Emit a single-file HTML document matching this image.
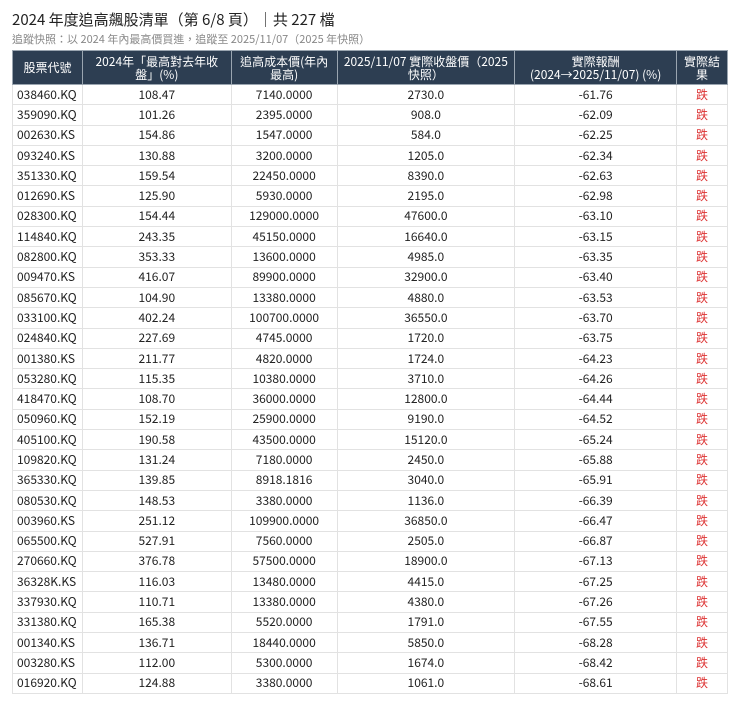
<!DOCTYPE html>
<html><head><meta charset="utf-8"><style>
body{margin:0;background:#fff;font-family:"Liberation Sans","Noto Sans CJK TC",sans-serif;color:#222;}
h1{position:absolute;left:12px;top:9px;margin:0;font-size:15px;font-weight:normal;font-family:"Noto Sans CJK TC",sans-serif;color:#222;}
.sub{position:absolute;left:12px;top:31px;font-size:11px;color:#888;font-family:"Noto Sans CJK TC",sans-serif;}
table{position:absolute;left:12px;top:50px;border-collapse:collapse;width:716px;font-size:12px;font-family:"Noto Sans CJK TC",sans-serif;}
th{background:#2d3e52;color:#fff;font-weight:normal;line-height:13px;height:34px;padding:0 4px;border:1px solid #9aa5b0;box-sizing:border-box;}
td{height:20.3px;padding:0 4px;border:1px solid #e2e2e2;text-align:center;line-height:14px;box-sizing:border-box;}
td:first-child{text-align:left;}
td.r{color:#d33;}
</style></head><body>
<h1>2024 年度追高飆股清單（第 6/8 頁）｜共 227 檔</h1>
<div class="sub">追蹤快照：以 2024 年內最高價買進，追蹤至 2025/11/07（2025 年快照）</div>
<table>
<colgroup><col style="width:70px"><col style="width:149px"><col style="width:106px"><col style="width:178px"><col style="width:162px"><col style="width:51px"></colgroup>
<tr><th>股票代號</th><th>2024年「最高對去年收盤」(%)</th><th>追高成本價(年內最高)</th><th>2025/11/07 實際收盤價（2025快照）</th><th>實際報酬<br>(2024→2025/11/07) (%)</th><th>實際結果</th></tr>
<tr><td>038460.KQ</td><td>108.47</td><td>7140.0000</td><td>2730.0</td><td>-61.76</td><td class="r">跌</td></tr>
<tr><td>359090.KQ</td><td>101.26</td><td>2395.0000</td><td>908.0</td><td>-62.09</td><td class="r">跌</td></tr>
<tr><td>002630.KS</td><td>154.86</td><td>1547.0000</td><td>584.0</td><td>-62.25</td><td class="r">跌</td></tr>
<tr><td>093240.KS</td><td>130.88</td><td>3200.0000</td><td>1205.0</td><td>-62.34</td><td class="r">跌</td></tr>
<tr><td>351330.KQ</td><td>159.54</td><td>22450.0000</td><td>8390.0</td><td>-62.63</td><td class="r">跌</td></tr>
<tr><td>012690.KS</td><td>125.90</td><td>5930.0000</td><td>2195.0</td><td>-62.98</td><td class="r">跌</td></tr>
<tr><td>028300.KQ</td><td>154.44</td><td>129000.0000</td><td>47600.0</td><td>-63.10</td><td class="r">跌</td></tr>
<tr><td>114840.KQ</td><td>243.35</td><td>45150.0000</td><td>16640.0</td><td>-63.15</td><td class="r">跌</td></tr>
<tr><td>082800.KQ</td><td>353.33</td><td>13600.0000</td><td>4985.0</td><td>-63.35</td><td class="r">跌</td></tr>
<tr><td>009470.KS</td><td>416.07</td><td>89900.0000</td><td>32900.0</td><td>-63.40</td><td class="r">跌</td></tr>
<tr><td>085670.KQ</td><td>104.90</td><td>13380.0000</td><td>4880.0</td><td>-63.53</td><td class="r">跌</td></tr>
<tr><td>033100.KQ</td><td>402.24</td><td>100700.0000</td><td>36550.0</td><td>-63.70</td><td class="r">跌</td></tr>
<tr><td>024840.KQ</td><td>227.69</td><td>4745.0000</td><td>1720.0</td><td>-63.75</td><td class="r">跌</td></tr>
<tr><td>001380.KS</td><td>211.77</td><td>4820.0000</td><td>1724.0</td><td>-64.23</td><td class="r">跌</td></tr>
<tr><td>053280.KQ</td><td>115.35</td><td>10380.0000</td><td>3710.0</td><td>-64.26</td><td class="r">跌</td></tr>
<tr><td>418470.KQ</td><td>108.70</td><td>36000.0000</td><td>12800.0</td><td>-64.44</td><td class="r">跌</td></tr>
<tr><td>050960.KQ</td><td>152.19</td><td>25900.0000</td><td>9190.0</td><td>-64.52</td><td class="r">跌</td></tr>
<tr><td>405100.KQ</td><td>190.58</td><td>43500.0000</td><td>15120.0</td><td>-65.24</td><td class="r">跌</td></tr>
<tr><td>109820.KQ</td><td>131.24</td><td>7180.0000</td><td>2450.0</td><td>-65.88</td><td class="r">跌</td></tr>
<tr><td>365330.KQ</td><td>139.85</td><td>8918.1816</td><td>3040.0</td><td>-65.91</td><td class="r">跌</td></tr>
<tr><td>080530.KQ</td><td>148.53</td><td>3380.0000</td><td>1136.0</td><td>-66.39</td><td class="r">跌</td></tr>
<tr><td>003960.KS</td><td>251.12</td><td>109900.0000</td><td>36850.0</td><td>-66.47</td><td class="r">跌</td></tr>
<tr><td>065500.KQ</td><td>527.91</td><td>7560.0000</td><td>2505.0</td><td>-66.87</td><td class="r">跌</td></tr>
<tr><td>270660.KQ</td><td>376.78</td><td>57500.0000</td><td>18900.0</td><td>-67.13</td><td class="r">跌</td></tr>
<tr><td>36328K.KS</td><td>116.03</td><td>13480.0000</td><td>4415.0</td><td>-67.25</td><td class="r">跌</td></tr>
<tr><td>337930.KQ</td><td>110.71</td><td>13380.0000</td><td>4380.0</td><td>-67.26</td><td class="r">跌</td></tr>
<tr><td>331380.KQ</td><td>165.38</td><td>5520.0000</td><td>1791.0</td><td>-67.55</td><td class="r">跌</td></tr>
<tr><td>001340.KS</td><td>136.71</td><td>18440.0000</td><td>5850.0</td><td>-68.28</td><td class="r">跌</td></tr>
<tr><td>003280.KS</td><td>112.00</td><td>5300.0000</td><td>1674.0</td><td>-68.42</td><td class="r">跌</td></tr>
<tr><td>016920.KQ</td><td>124.88</td><td>3380.0000</td><td>1061.0</td><td>-68.61</td><td class="r">跌</td></tr>
</table>
</body></html>
